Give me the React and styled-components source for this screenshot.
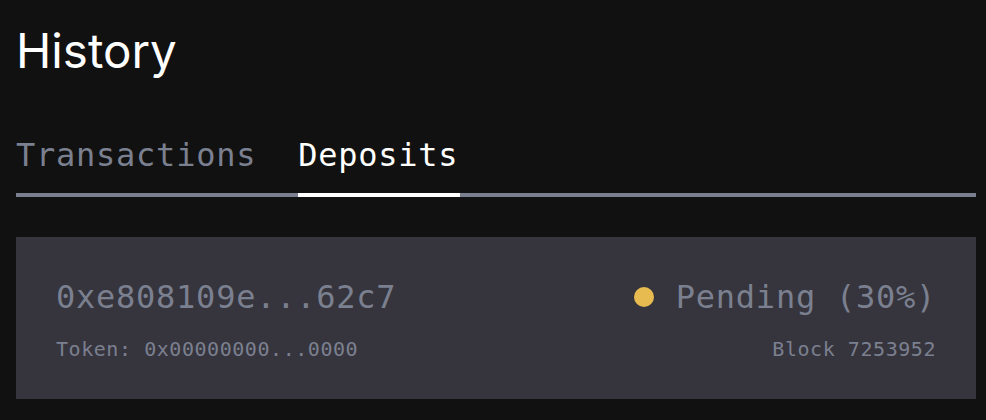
import React, { useState } from "react";
import styled, { createGlobalStyle } from "styled-components";

const Global = createGlobalStyle`
  html, body { margin: 0; padding: 0; background: #111111; }
  body { font-family: Inter, "Noto Sans", sans-serif; }
`;

const Page = styled.div`
  padding: 16px 10px 16px 16px;
  display: flex;
  flex-direction: column;
`;

const Title = styled.h1`
  margin: 0;
  font-family: Inter, "Noto Sans", sans-serif;
  font-weight: 400;
  font-size: 47.5px;
  line-height: 70px;
  color: #ffffff;
`;

const mono = `"DejaVu Sans Mono", "Liberation Mono", monospace`;

const TabBar = styled.div`
  margin-top: 49px;
  display: flex;
  gap: 40px;
  border-bottom: 4px solid #7b8090;
`;

const Tab = styled.button`
  background: none;
  border: none;
  padding: 0 2px 18px 0;
  margin-bottom: -4px;
  font-family: ${mono};
  font-size: 32px;
  letter-spacing: 0.75px;
  line-height: 40px;
  color: ${(p) => (p.$active ? "#ffffff" : "#7b8090")};
  border-bottom: 4px solid ${(p) => (p.$active ? "#ffffff" : "transparent")};
  cursor: pointer;
`;

const Card = styled.div`
  margin-top: 40px;
  background: #36353d;
  padding: 40px 40px 36px;
  display: flex;
  justify-content: space-between;
`;

const Col = styled.div`
  display: flex;
  flex-direction: column;
  align-items: ${(p) => (p.$right ? "flex-end" : "flex-start")};
  gap: 18px;
`;

const Big = styled.div`
  display: flex;
  align-items: center;
  gap: 22px;
  font-family: ${mono};
  font-size: 32px;
  letter-spacing: 0.75px;
  line-height: 40px;
  color: #7b8090;
`;

const Small = styled.div`
  font-family: ${mono};
  font-size: 20px;
  letter-spacing: 0.55px;
  line-height: 28px;
  color: #7b8090;
`;

const Dot = styled.span`
  width: 20px;
  height: 20px;
  border-radius: 50%;
  background: #e8bb50;
  flex: none;
`;

export default function App() {
  const [tab, setTab] = useState("deposits");
  return (
    <>
      <Global />
      <Page>
        <Title>History</Title>
        <TabBar>
          <Tab $active={tab === "transactions"} onClick={() => setTab("transactions")}>
            Transactions
          </Tab>
          <Tab $active={tab === "deposits"} onClick={() => setTab("deposits")}>
            Deposits
          </Tab>
        </TabBar>
        <Card>
          <Col>
            <Big>0xe808109e...62c7</Big>
            <Small>Token: 0x00000000...0000</Small>
          </Col>
          <Col $right>
            <Big>
              <Dot />
              Pending (30%)
            </Big>
            <Small>Block 7253952</Small>
          </Col>
        </Card>
      </Page>
    </>
  );
}
